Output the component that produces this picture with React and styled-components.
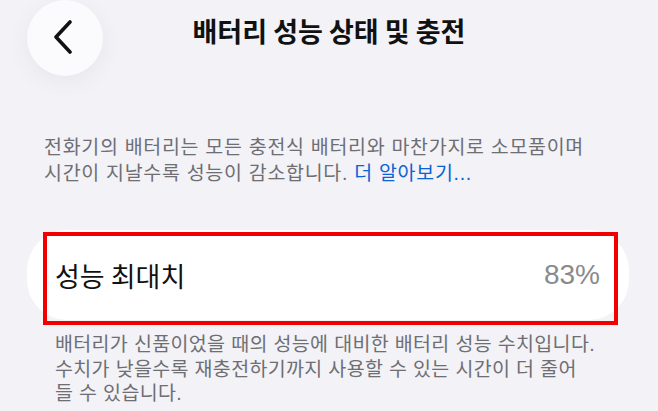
import React from 'react';
import styled, { createGlobalStyle } from 'styled-components';

const GlobalStyle = createGlobalStyle`
  html, body {
    margin: 0;
    padding: 0;
    background: #f2f2f7;
    font-family: "Noto Sans CJK KR", "Noto Sans", sans-serif;
    overflow: hidden;
  }
`;

const Page = styled.div`
  width: 658px;
  height: 411px;
  background: #f2f2f7;
  overflow: hidden;
`;

const Header = styled.div`
  display: grid;
  grid-template-columns: 1fr auto 1fr;
  align-items: center;
  height: 68px;
  padding: 0 27px;
`;

const BackButton = styled.button`
  width: 76px;
  height: 76px;
  border: none;
  border-radius: 50%;
  background: #fbfbfe;
  box-shadow: 0 6px 24px rgba(0, 0, 0, 0.05);
  display: flex;
  align-items: center;
  justify-content: center;
  padding: 0 4px 3px 0;
`;

const Title = styled.h1`
  margin: 0 0 15px;
  font-size: 27px;
  line-height: 32px;
  font-weight: 700;
  color: #111;
`;

const Desc = styled.p`
  margin: 66px 0 0 44px;
  font-family: "Liberation Sans", "Noto Sans CJK KR", sans-serif;
  font-size: 19.5px;
  line-height: 26px;
  color: #6e6e73;
  letter-spacing: 0.7px;
`;

const Link = styled.span`
  color: #0c63d4;
`;

const CardWrap = styled.div`
  position: relative;
  margin: 44px 29px 0 27px;
`;

const Card = styled.div`
  background: #fff;
  border-radius: 40px;
  height: 90px;
  display: flex;
  align-items: center;
  justify-content: space-between;
  padding: 0 29px 0 28px;
`;

const Label = styled.span`
  font-size: 27px;
  color: #111;
`;

const Value = styled.span`
  font-size: 28px;
  color: #8a8a8e;
  font-family: "Liberation Sans", "Noto Sans", sans-serif;
`;

const Highlight = styled.div`
  position: absolute;
  left: 16px;
  top: 2px;
  width: 575px;
  height: 93px;
  border: 4px solid #f00000;
  box-sizing: border-box;
  pointer-events: none;
`;

const Footnote = styled.p`
  margin: 12px 0 0 55px;
  font-family: "Liberation Sans", "Noto Sans CJK KR", sans-serif;
  font-size: 19.5px;
  line-height: 24.5px;
  color: #6e6e73;
  letter-spacing: 0.35px;
`;

const Chevron = () => (
  <svg width="22" height="34" viewBox="0 0 22 34">
    <path d="M18 2 L4 17 L18 32" fill="none" stroke="#111" strokeWidth="3.6" strokeLinecap="round" strokeLinejoin="round" />
  </svg>
);

export default function App() {
  return (
    <Page>
      <GlobalStyle />
      <Header>
        <div>
          <BackButton aria-label="back">
            <Chevron />
          </BackButton>
        </div>
        <Title>배터리 성능 상태 및 충전</Title>
        <div />
      </Header>
      <Desc>
        전화기의 배터리는 모든 충전식 배터리와 마찬가지로 소모품이며
        <br />
        시간이 지날수록 성능이 감소합니다. <Link>더 알아보기...</Link>
      </Desc>
      <CardWrap>
        <Card>
          <Label>성능 최대치</Label>
          <Value>83%</Value>
        </Card>
        <Highlight />
      </CardWrap>
      <Footnote>
        배터리가 신품이었을 때의 성능에 대비한 배터리 성능 수치입니다.
        <br />
        수치가 낮을수록 재충전하기까지 사용할 수 있는 시간이 더 줄어
        <br />
        들 수 있습니다.
      </Footnote>
    </Page>
  );
}
